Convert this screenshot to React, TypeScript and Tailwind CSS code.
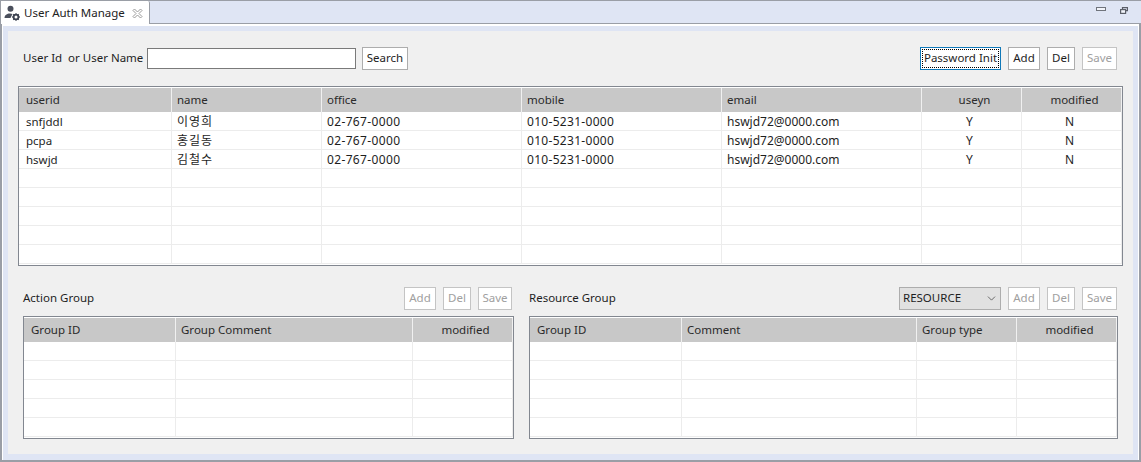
import { ChevronDown } from "lucide-react";

const font = "font-['Noto_Sans','Noto_Sans_CJK_KR',sans-serif]";

interface Column {
    title: string;
    width: number;
    center?: boolean;
    cell?: string;
}

const userColumns: Column[] = [
    { title: "userid", width: 153, cell: "text-[11.5px]" },
    { title: "name", width: 150, cell: "tracking-[1px]" },
    { title: "office", width: 200, cell: "tracking-[0.35px]" },
    { title: "mobile", width: 200, cell: "tracking-[0.3px]" },
    { title: "email", width: 200 },
    { title: "useyn", width: 100, center: true },
    { title: "modified", width: 100, center: true },
];

const actionColumns: Column[] = [
    { title: "Group ID", width: 152 },
    { title: "Group Comment", width: 237 },
    { title: "modified", width: 100, center: true },
];

const resourceColumns: Column[] = [
    { title: "Group ID", width: 152 },
    { title: "Comment", width: 235 },
    { title: "Group type", width: 100 },
    { title: "modified", width: 100, center: true },
];

const users = [
    ["snfjddl", "이영희", "02-767-0000", "010-5231-0000", "hswjd72@0000.com", "Y", "N"],
    ["pcpa", "홍길동", "02-767-0000", "010-5231-0000", "hswjd72@0000.com", "Y", "N"],
    ["hswjd", "김철수", "02-767-0000", "010-5231-0000", "hswjd72@0000.com", "Y", "N"],
];

function Btn({ label, width, disabled, focused }: { label: string; width: number; disabled?: boolean; focused?: boolean }) {
    return (
        <button
            style={{ width }}
            className={
                "h-[23px] shrink-0 bg-white border text-[11.5px] leading-none whitespace-nowrap flex items-center justify-center " +
                (focused ? "border-[#0f78b8] " : disabled ? "border-[#c4c4c4] pb-px " : "border-[#adadad] pb-px ") +
                (disabled ? "text-[#a0a0a0]" : "text-[#1e1e1e]")
            }
        >
            {focused ? (
                <span className="border border-dotted border-black h-[19px] w-[77px] pb-px flex items-center justify-center">{label}</span>
            ) : (
                label
            )}
        </button>
    );
}

function Table({ columns, rows, empty, height }: { columns: Column[]; rows: string[][]; empty: number; height: number }) {
    return (
        <div style={{ height }} className="border border-[#828790] bg-white pt-px overflow-hidden">
            <div className="flex h-[24px] bg-[#c8c8c8] text-[#2a2a2a] text-[11.5px]">
                {columns.map((c, j) => (
                    <div
                        key={c.title}
                        style={{ width: c.width }}
                        className={
                            "shrink-0 border-r border-[#f0f0f0] flex items-center pb-px " +
                            (j === 0 ? "pl-[7px] pr-[5px] " : c.center ? "pl-[9px] pr-[3px] " : "pl-[5px] pr-[5px] ") +
                            (c.center ? "justify-center" : "")
                        }
                    >
                        {c.title}
                    </div>
                ))}
            </div>
            {rows.map((row, i) => (
                <div key={i} className="flex h-[19px] border-b border-[#ececec]">
                    {columns.map((c, j) => (
                        <div
                            key={c.title}
                            style={{ width: c.width }}
                            className={
                                "shrink-0 border-r border-[#ececec] flex items-center pt-px text-[#1e1e1e] " +
                                (j === 0 ? "pl-[7px] pr-[5px] " : c.center ? "pl-[5px] pr-[9px] " : "pl-[5px] pr-[5px] ") +
                                (c.center ? "justify-center " : "") +
                                (c.cell ?? "")
                            }
                        >
                            {row[j]}
                        </div>
                    ))}
                </div>
            ))}
            {Array.from({ length: empty }).map((_, i) => (
                <div key={i} className="flex h-[19px] border-b border-[#ececec]">
                    {columns.map((c) => (
                        <div key={c.title} style={{ width: c.width }} className="shrink-0 border-r border-[#ececec]" />
                    ))}
                </div>
            ))}
        </div>
    );
}

function TabIcon() {
    return (
        <svg width="18" height="16" viewBox="0 0 18 16" className="shrink-0">
            <circle cx="6.5" cy="3.8" r="3" fill="#4a4f5c" />
            <path d="M0.5 13c0-3 2.5-4.5 5.5-4.5 1 0 2 .2 2.5.5L6.5 13z" fill="#4a4f5c" />
            <circle cx="12" cy="12" r="2.4" fill="none" stroke="#3c4250" strokeWidth="1.8" />
            <path d="M12 8.2v1.2M12 14.6v1.2M8.2 12h1.2M14.6 12h1.2M9.3 9.3l.9.9M13.8 13.8l.9.9M14.7 9.3l-.9.9M10.2 13.8l-.9.9" stroke="#3c4250" strokeWidth="1.3" />
        </svg>
    );
}

export default function App() {
    return (
        <div className={font + " w-[1141px] h-[462px] bg-white text-[12px] text-[#1e1e1e] flex flex-col overflow-hidden"}>
            <div className="h-[24px] flex bg-[#dfe5f4] border-t border-[#9a9ea6]">
                <div className="w-[150px] h-[24px] bg-white border-x border-[#9a9ea6] rounded-tr-[2px] flex items-center pl-[3px] shrink-0">
                    <TabIcon />
                    <span className="ml-[2px] text-[#222] text-[11.5px] whitespace-nowrap">User Auth Manage</span>
                    <svg width="11" height="11" viewBox="0 0 11 11" className="ml-[7px] shrink-0" fill="none" stroke="#9a9a9a" strokeWidth="1">
                        <path d="M1 2.5 2.5 1 5.5 4 8.5 1 10 2.5 7 5.5 10 8.5 8.5 10 5.5 7 2.5 10 1 8.5 4 5.5z" />
                    </svg>
                </div>
                <div className="flex-1 border-b border-[#9a9ea6] flex justify-end items-start pt-[6px] pr-[13px] gap-[14px]">
                    <div className="w-[10px] h-[4px] bg-[#f2f4fa] border border-[#70747c]" />
                    <svg width="8" height="7" viewBox="0 0 8 7" fill="none" stroke="#5a5e68" strokeWidth="1.2">
                        <path d="M2.5 2V.6h5v3H5.5" />
                        <rect x="0.6" y="2.6" width="5" height="3.8" fill="#f2f4fa" />
                    </svg>
                </div>
            </div>
            <div className="flex-1 border-x-2 border-b-2 border-[#9a9ea6] bg-white pt-[2px] flex flex-col">
                <div className="flex-1 mx-px bg-[#dfe5f4] px-[5px] pt-[5px] pb-[6px] flex flex-col">
                    <div className="flex-1 bg-[#f0f0f0] pl-[10px] pr-[9px] pt-[16px] flex flex-col">
                        <div className="flex items-center h-[23px] pl-[5px]">
                            <span className="whitespace-pre w-[124px] text-[11.5px] pb-px">User Id  or User Name</span>
                            <div className="w-[209px] h-[21px] bg-white border border-[#7a7a7a]" />
                            <div className="ml-[6px]"><Btn label="Search" width={46} /></div>
                            <div className="ml-auto flex gap-[7px] pr-[7px]">
                                <Btn label="Password Init" width={81} focused />
                                <Btn label="Add" width={32} />
                                <Btn label="Del" width={28} />
                                <Btn label="Save" width={35} disabled />
                            </div>
                        </div>
                        <div className="mt-[16px] w-[1105px]">
                            <Table columns={userColumns} rows={users} empty={5} height={180} />
                        </div>
                        <div className="flex mt-[21px] pl-[5px] gap-[15px]">
                            <div className="w-[491px]">
                                <div className="h-[23px] flex items-center">
                                    <span className="text-[11.5px] pb-px">Action Group</span>
                                    <div className="ml-auto flex gap-[7px] pr-[2px]">
                                        <Btn label="Add" width={32} disabled />
                                        <Btn label="Del" width={28} disabled />
                                        <Btn label="Save" width={34} disabled />
                                    </div>
                                </div>
                                <div className="mt-[6px]">
                                    <Table columns={actionColumns} rows={[]} empty={5} height={123} />
                                </div>
                            </div>
                            <div className="w-[589px]">
                                <div className="h-[23px] flex items-center">
                                    <span className="text-[11.5px] pb-px">Resource Group</span>
                                    <div className="ml-auto flex gap-[7px] pr-px">
                                        <div className="w-[102px] h-[23px] bg-[#e1e1e1] border border-[#adadad] flex items-center pl-[3px] pr-[2px] justify-between">
                                            <span className="text-[11.5px] pb-px">RESOURCE</span>
                                            <ChevronDown size={13} strokeWidth={1.4} className="text-[#444]" />
                                        </div>
                                        <Btn label="Add" width={32} disabled />
                                        <Btn label="Del" width={28} disabled />
                                        <Btn label="Save" width={35} disabled />
                                    </div>
                                </div>
                                <div className="mt-[6px]">
                                    <Table columns={resourceColumns} rows={[]} empty={5} height={123} />
                                </div>
                            </div>
                        </div>
                    </div>
                </div>
            </div>
        </div>
    );
}
